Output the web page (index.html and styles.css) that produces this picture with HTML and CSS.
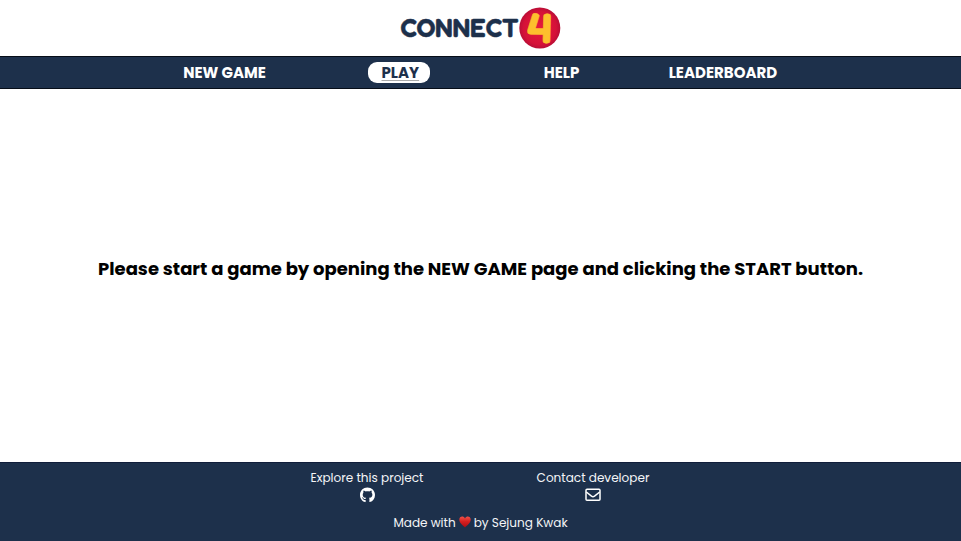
FILE: index.html
```html
<!DOCTYPE html>
<html lang="en">
<head>
<meta charset="utf-8">
<title>Connect 4</title>
<link rel="stylesheet" href="styles.css">
</head>
<body>
<header class="header">
  <svg class="logo" width="162" height="56" viewBox="400 0 162 56" role="img" aria-label="Connect 4">
    <defs>
      <radialGradient id="disc"><stop offset="0" stop-color="#e51a3b"/><stop offset=".8" stop-color="#d51138"/><stop offset="1" stop-color="#b90e36"/></radialGradient>
    </defs>
    <text class="logo-word" x="400.5" y="36.800" textLength="118" lengthAdjust="spacingAndGlyphs">CONNECT</text>
    <circle cx="539.8" cy="28" r="20.5" fill="url(#disc)"/>
    <text class="logo-four" x="527" y="42.5" textLength="25" lengthAdjust="spacingAndGlyphs" transform="rotate(1.5 540 28)">4</text>
  </svg>
</header>
<nav class="nav">
  <a class="nav-item"><span class="label">NEW GAME</span></a>
  <a class="nav-item"><span class="label play">PLAY</span></a>
  <a class="nav-item"><span class="label">HELP</span></a>
  <a class="nav-item"><span class="label">LEADERBOARD</span></a>
</nav>
<main class="main"><h1 class="message">Please start a game by opening the NEW GAME page and clicking the START button.</h1></main>
<footer class="footer">
  <div class="links">
    <div class="link"><span>Explore this project</span>
      <svg class="icon" width="15" height="16" viewBox="0 0 496 512"><path fill="#fff" d="M244.800 8C106.100 8 0 113.300 0 252c0 110.900 69.800 205.800 169.500 239.200 12.800 2.300 17.300-5.600 17.300-12.100 0-6.200-.3-40.400-.3-61.400 0 0-70 15-84.700-29.800 0 0-11.400-29.100-27.800-36.600 0 0-22.900-15.700 1.600-15.400 0 0 24.900 2 38.600 25.800 21.900 38.600 58.600 27.500 72.900 20.900 2.300-16 8.800-27.100 16-33.700-55.900-6.200-112.300-14.300-112.300-110.500 0-27.500 7.600-41.300 23.600-58.900-2.600-6.500-11.100-33.300 2.600-67.900 20.900-6.500 69 27 69 27 20-5.600 41.500-8.500 62.800-8.500s42.800 2.900 62.800 8.500c0 0 48.100-33.600 69-27 13.700 34.700 5.200 61.400 2.600 67.900 16 17.700 25.800 31.500 25.800 58.900 0 96.500-58.900 104.200-114.800 110.500 9.200 7.900 17 22.900 17 46.400 0 33.700-.3 75.400-.3 83.600 0 6.500 4.600 14.400 17.300 12.100C428.200 457.800 496 362.900 496 252 496 113.300 383.500 8 244.800 8z"/></svg>
    </div>
    <div class="link"><span>Contact developer</span>
      <svg class="icon" width="16" height="16" viewBox="0 0 16 16" fill="none" stroke="#fff" stroke-width="1.5" stroke-linejoin="round"><rect x="1" y="2.250" width="14" height="11" rx="1"/><path d="M1.300 5l5.200 4.200q1.500 1.100 3 0l5.200-4.200"/></svg>
    </div>
  </div>
  <p class="credit"><span>Made with</span>
    <svg class="heart" width="12" height="12" viewBox="0 0 12 12"><defs><linearGradient id="h" x2="0" y2="1"><stop stop-color="#ef5148"/><stop offset=".45" stop-color="#d51f20"/><stop offset="1" stop-color="#a90d15"/></linearGradient></defs><path fill="url(#h)" d="M6 11.600C4.500 9.500.4 7.500.3 3.700.2.300 4.500-.6 6 2.500 7.500-.6 11.800.3 11.700 3.700 11.600 7.500 7.500 9.500 6 11.600z"/></svg>
    <span>by Sejung Kwak</span></p>
</footer>
</body>
</html>
```
FILE: styles.css
```css
* { box-sizing: border-box; }
body {
  margin: 0;
  height: 541px;
  display: flex;
  flex-direction: column;
  overflow: hidden;
  background: #fff;
  color: #000;
  font-family: Poppins, Inter, sans-serif;
}
.header {
  height: 56px;
  display: flex;
  justify-content: center;
}
.logo { overflow: visible; }
.logo-word {
  font: 600 25.5px "Fredoka One", Fredoka, Poppins, Inter, sans-serif;
  fill: #1d304b;
  stroke: #1d304b;
  stroke-width: .5;
}
.logo-four {
  font: 600 42px "Fredoka One", Fredoka, Poppins, Inter, sans-serif;
  fill: #fdbf2d;
  stroke: #fdbf2d;
  stroke-width: .5;
}
.nav {
  height: 33px;
  padding-left: 136.5px;
  display: grid;
  grid-template-columns: 176px 173px 152px 171px;
  align-items: center;
  background: #1d304b;
  border-top: 1px solid #060d18;
  border-bottom: 1px solid #060d18;
  color: #fff;
  font-size: 15px;
  font-weight: 700;
}
.nav-item { display: flex; justify-content: center; white-space: nowrap; }
.label { display: block; line-height: 22px; }
.play {
  width: 62px;
  height: 21px;
  line-height: 22px;
  padding-left: 13.5px;
  border-radius: 9px;
  background: #fff;
  color: #1d304b;
  text-decoration: underline #aaa 1px;
  text-underline-offset: 2px;
}
.main { flex: 1; display: grid; place-items: center; }
.message { margin: 0 0 13px; font-size: 18.010px; font-weight: 700; line-height: 28px; white-space: nowrap; }
.footer {
  height: 79px;
  padding-top: 6px;
  background: #1d304b;
  border-top: 1px solid #101d3a;
  color: #f4f5f7;
  font-size: 12.060px;
  line-height: 18px;
}
.links { display: grid; grid-template-columns: 226px 226px; justify-content: center; margin-right: 1px; }
.link { display: flex; flex-direction: column; align-items: center; }
.icon { margin-top: .4px; }
.credit { margin: 10.6px 0 0; display: flex; justify-content: center; gap: 3px; white-space: nowrap; }
.heart { margin-top: 2px; }
```
